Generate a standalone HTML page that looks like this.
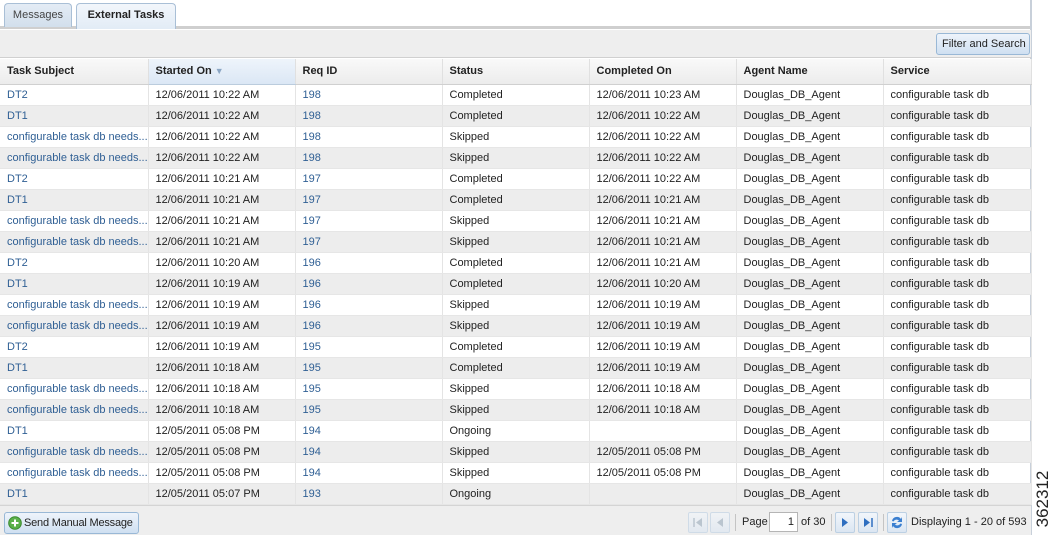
<!DOCTYPE html>
<html><head><style>
*{margin:0;padding:0;box-sizing:border-box}
body{width:1054px;height:535px;background:#fff;font-family:"Liberation Sans",sans-serif;font-size:11px;color:#222;position:relative;overflow:hidden}
.panel{position:absolute;left:0;top:0;width:1032px;height:535px;border-right:2px solid #c8d0da;}
.tabs{position:absolute;left:0;top:0;width:1030px;height:29px;border-bottom:3px solid #cfcfcf;background:#fff}
.tab{position:absolute;top:3px;height:24px;border:1px solid #a9bfd6;border-bottom:none;border-radius:4px 4px 0 0;background:linear-gradient(#e9f0f8,#d4e1ef);font-size:11px;line-height:22px;text-align:center;color:#333}
.toolbar{position:absolute;left:0;top:30px;width:1031px;height:28px;background:#eeeeee;border-bottom:1px solid #d0d0d0}
.btn{position:absolute;border:1px solid #99b8d6;border-radius:3px;background:linear-gradient(#eef4fb,#cfe0f1);font-size:11px;color:#222;line-height:19px;padding:0 5px;white-space:nowrap}
table{position:absolute;left:0;top:59px;border-collapse:collapse;width:1031px;table-layout:fixed}
th{height:25px;text-align:left;font-weight:bold;font-size:11px;padding-left:7px;background:linear-gradient(#f9f9f9,#ececec);border-right:1px solid #e0e0e0;border-bottom:1px solid #d0d0d0;color:#222}
th.sort{background:linear-gradient(#eef4fb,#dbe7f5);border-bottom:1px solid #bcd}
td{height:21px;padding-left:7px;border-right:1px solid #e4e4e4;border-bottom:1px solid #e6e6e6;white-space:nowrap;overflow:hidden;font-size:11px;color:#222}
tr.g td{background:#ededed}
td.l{color:#2f5f94}
.footer{position:absolute;left:0;top:505px;width:1031px;height:30px;background:#eeeeee;border-top:1px solid #d4d4d4}
.pb{position:absolute;top:6px;width:20px;height:21px;border:1px solid #bcd0e3;border-radius:2px;background:linear-gradient(#f2f6fb,#dbe6f2)}
.sep{position:absolute;top:8px;width:1px;height:17px;background:#c4c4c4}
.side{position:absolute;left:1033px;top:466px;width:20px;height:66px;}
.side span{position:absolute;left:50%;top:50%;transform:translate(-50%,-50%) rotate(-90deg);font-size:17px;color:#222;white-space:nowrap}
</style></head><body>
<div class="panel"></div>
<div class="tabs">
<div class="tab" style="left:4px;width:68px;background:linear-gradient(#e4ecf5,#d2dfec);color:#444">Messages</div>
<div class="tab" style="left:76px;width:100px;background:linear-gradient(#f2f6fb,#e2ecf6);height:26px;font-weight:bold;color:#222">External Tasks</div>
</div>
<div class="toolbar"><div class="btn" style="left:936px;top:3px;height:22px;width:94px;line-height:20px">Filter and Search</div></div>
<table>
<colgroup><col style="width:148px"><col style="width:147px"><col style="width:147px"><col style="width:147px"><col style="width:147px"><col style="width:147px"><col style="width:148px"></colgroup>
<tr><th>Task Subject</th><th class="sort">Started On <span style="color:#8ba6c4;font-size:9px">&#9660;</span></th><th>Req ID</th><th>Status</th><th>Completed On</th><th>Agent Name</th><th>Service</th></tr>
<tr><td class="l">DT2</td><td>12/06/2011 10:22 AM</td><td class="l">198</td><td>Completed</td><td>12/06/2011 10:23 AM</td><td>Douglas_DB_Agent</td><td>configurable task db</td></tr>
<tr class="g"><td class="l">DT1</td><td>12/06/2011 10:22 AM</td><td class="l">198</td><td>Completed</td><td>12/06/2011 10:22 AM</td><td>Douglas_DB_Agent</td><td>configurable task db</td></tr>
<tr><td class="l">configurable task db needs...</td><td>12/06/2011 10:22 AM</td><td class="l">198</td><td>Skipped</td><td>12/06/2011 10:22 AM</td><td>Douglas_DB_Agent</td><td>configurable task db</td></tr>
<tr class="g"><td class="l">configurable task db needs...</td><td>12/06/2011 10:22 AM</td><td class="l">198</td><td>Skipped</td><td>12/06/2011 10:22 AM</td><td>Douglas_DB_Agent</td><td>configurable task db</td></tr>
<tr><td class="l">DT2</td><td>12/06/2011 10:21 AM</td><td class="l">197</td><td>Completed</td><td>12/06/2011 10:22 AM</td><td>Douglas_DB_Agent</td><td>configurable task db</td></tr>
<tr class="g"><td class="l">DT1</td><td>12/06/2011 10:21 AM</td><td class="l">197</td><td>Completed</td><td>12/06/2011 10:21 AM</td><td>Douglas_DB_Agent</td><td>configurable task db</td></tr>
<tr><td class="l">configurable task db needs...</td><td>12/06/2011 10:21 AM</td><td class="l">197</td><td>Skipped</td><td>12/06/2011 10:21 AM</td><td>Douglas_DB_Agent</td><td>configurable task db</td></tr>
<tr class="g"><td class="l">configurable task db needs...</td><td>12/06/2011 10:21 AM</td><td class="l">197</td><td>Skipped</td><td>12/06/2011 10:21 AM</td><td>Douglas_DB_Agent</td><td>configurable task db</td></tr>
<tr><td class="l">DT2</td><td>12/06/2011 10:20 AM</td><td class="l">196</td><td>Completed</td><td>12/06/2011 10:21 AM</td><td>Douglas_DB_Agent</td><td>configurable task db</td></tr>
<tr class="g"><td class="l">DT1</td><td>12/06/2011 10:19 AM</td><td class="l">196</td><td>Completed</td><td>12/06/2011 10:20 AM</td><td>Douglas_DB_Agent</td><td>configurable task db</td></tr>
<tr><td class="l">configurable task db needs...</td><td>12/06/2011 10:19 AM</td><td class="l">196</td><td>Skipped</td><td>12/06/2011 10:19 AM</td><td>Douglas_DB_Agent</td><td>configurable task db</td></tr>
<tr class="g"><td class="l">configurable task db needs...</td><td>12/06/2011 10:19 AM</td><td class="l">196</td><td>Skipped</td><td>12/06/2011 10:19 AM</td><td>Douglas_DB_Agent</td><td>configurable task db</td></tr>
<tr><td class="l">DT2</td><td>12/06/2011 10:19 AM</td><td class="l">195</td><td>Completed</td><td>12/06/2011 10:19 AM</td><td>Douglas_DB_Agent</td><td>configurable task db</td></tr>
<tr class="g"><td class="l">DT1</td><td>12/06/2011 10:18 AM</td><td class="l">195</td><td>Completed</td><td>12/06/2011 10:19 AM</td><td>Douglas_DB_Agent</td><td>configurable task db</td></tr>
<tr><td class="l">configurable task db needs...</td><td>12/06/2011 10:18 AM</td><td class="l">195</td><td>Skipped</td><td>12/06/2011 10:18 AM</td><td>Douglas_DB_Agent</td><td>configurable task db</td></tr>
<tr class="g"><td class="l">configurable task db needs...</td><td>12/06/2011 10:18 AM</td><td class="l">195</td><td>Skipped</td><td>12/06/2011 10:18 AM</td><td>Douglas_DB_Agent</td><td>configurable task db</td></tr>
<tr><td class="l">DT1</td><td>12/05/2011 05:08 PM</td><td class="l">194</td><td>Ongoing</td><td></td><td>Douglas_DB_Agent</td><td>configurable task db</td></tr>
<tr class="g"><td class="l">configurable task db needs...</td><td>12/05/2011 05:08 PM</td><td class="l">194</td><td>Skipped</td><td>12/05/2011 05:08 PM</td><td>Douglas_DB_Agent</td><td>configurable task db</td></tr>
<tr><td class="l">configurable task db needs...</td><td>12/05/2011 05:08 PM</td><td class="l">194</td><td>Skipped</td><td>12/05/2011 05:08 PM</td><td>Douglas_DB_Agent</td><td>configurable task db</td></tr>
<tr class="g"><td class="l">DT1</td><td>12/05/2011 05:07 PM</td><td class="l">193</td><td>Ongoing</td><td></td><td>Douglas_DB_Agent</td><td>configurable task db</td></tr>
</table>
<div class="footer">
<div class="btn" style="left:4px;top:6px;height:22px;width:135px;padding-left:19px;padding-right:0;line-height:20px;letter-spacing:-0.2px">
<svg style="position:absolute;left:3px;top:3px" width="14" height="14" viewBox="0 0 14 14"><circle cx="7" cy="7" r="6.3" fill="#5bb04a" stroke="#3a8a2e"/><path d="M7 3.5v7M3.5 7h7" stroke="#fff" stroke-width="2"/></svg>Send Manual Message</div>
<div class="pb" style="left:688px;opacity:.6"><svg width="18" height="19" viewBox="0 0 18 19"><path d="M5 5v9" stroke="#9ab" stroke-width="1.5"/><path d="M13 5l-6 4.5 6 4.5z" fill="#9ab"/></svg></div>
<div class="pb" style="left:710px;opacity:.6"><svg width="18" height="19" viewBox="0 0 18 19"><path d="M12 5l-6 4.5 6 4.5z" fill="#9ab"/></svg></div>
<div class="sep" style="left:735px"></div>
<span style="position:absolute;left:742px;top:10px">Page</span>
<div style="position:absolute;left:769px;top:6px;width:29px;height:20px;background:#fff;border:1px solid #b5b5b5;text-align:right;padding-right:3px;line-height:18px">1</div>
<span style="position:absolute;left:801px;top:10px">of 30</span>
<div class="sep" style="left:831px"></div>
<div class="pb" style="left:835px"><svg width="18" height="19" viewBox="0 0 18 19"><path d="M6 5l6 4.5-6 4.5z" fill="#2e6fc0"/></svg></div>
<div class="pb" style="left:858px"><svg width="18" height="19" viewBox="0 0 18 19"><path d="M5 5l6 4.5-6 4.5z" fill="#2e6fc0"/><path d="M13 5v9" stroke="#2e6fc0" stroke-width="1.5"/></svg></div>
<div class="sep" style="left:883px"></div>
<div class="pb" style="left:887px"><svg width="18" height="19" viewBox="0 0 18 19"><path d="M4 8a5 5 0 0 1 9-2l1-2v5h-5l2-1.5a3.5 3.5 0 0 0-5.5 1z" fill="#3a7fd0"/><path d="M14 11a5 5 0 0 1-9 2l-1 2v-5h5l-2 1.5a3.5 3.5 0 0 0 5.5-1z" fill="#3a7fd0"/></svg></div>
<span style="position:absolute;left:911px;top:10px">Displaying 1 - 20 of 593</span>
</div>
<div class="side"><span>362312</span></div>
</body></html>
